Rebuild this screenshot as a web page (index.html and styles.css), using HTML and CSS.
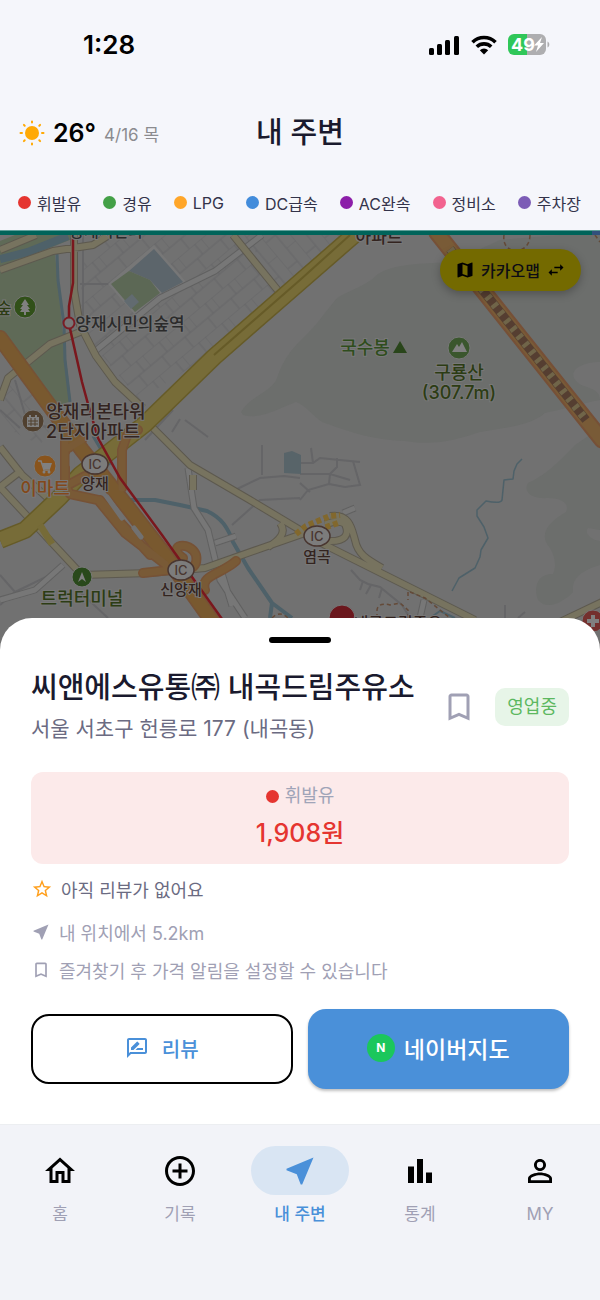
FILE: index.html
```html
<!DOCTYPE html>
<html lang="ko">
<head>
  <meta charset="UTF-8">
  <meta name="viewport" content="width=device-width, initial-scale=1.0">
  <title>내 주변</title>
  <link rel="stylesheet" href="styles.css">
</head>
<body>

<div class="status-bar">
  <span class="clock">1:28</span>
  <div class="status-icons">
    <svg width="31" height="20" viewBox="0 0 31 20">
      <rect x="0" y="13" width="5" height="7" rx="1.5"/>
      <rect x="8" y="9" width="5" height="11" rx="1.5"/>
      <rect x="16" y="5" width="5" height="15" rx="1.5"/>
      <rect x="25" y="1" width="5" height="19" rx="1.5"/>
    </svg>
    <svg width="26" height="20" viewBox="0 0 26 20">
      <g fill="none" stroke="#000" stroke-width="3.6">
        <path d="M1.5 7.2a16.5 16.5 0 0 1 23 0"/>
        <path d="M5.8 11.8a10.4 10.4 0 0 1 14.4 0"/>
      </g>
      <path d="M13 19.5l-4.2-4.3a6 6 0 0 1 8.4 0z"/>
    </svg>
    <svg width="42" height="21" viewBox="0 0 42 21">
      <path d="M19 0h13a6 6 0 0 1 6 6v9a6 6 0 0 1-6 6H19z" fill="#aeaeb0"/>
      <path d="M19 0H6a6 6 0 0 0-6 6v9a6 6 0 0 0 6 6h13z" fill="#30c759"/>
      <path d="M39.5 7.5c2.4 1 2.4 5 0 6z" fill="#aeaeb0"/>
      <text class="battery-text" x="3" y="17">49</text>
      <path d="M34 3l-8 8.5h4l-2 6.500 8-9h-4z" fill="#fff"/>
    </svg>
  </div>
</div>

<header class="header">
  <div class="weather">
    <svg width="26" height="26" viewBox="0 0 26 26">
      <circle cx="13" cy="13" r="7" fill="#ffa904"/>
      <g stroke="#ffa904" stroke-width="2" stroke-linecap="round">
        <path d="M13 1.5v1M13 23.5v1M1.5 13h1.5M23 13h1.5M4.9 4.9l.8.8M20.3 20.3l.8.8M4.9 21.1l.8-.8M20.3 5.700l.8-.8"/>
      </g>
    </svg>
    <span class="temp">26°</span>
    <span class="date">4/16 목</span>
  </div>
  <h1>내 주변</h1>
</header>

<ul class="legend">
  <li><span class="dot red"></span>휘발유</li>
  <li><span class="dot green"></span>경유</li>
  <li><span class="dot orange"></span>LPG</li>
  <li><span class="dot blue"></span>DC급속</li>
  <li><span class="dot purple"></span>AC완속</li>
  <li><span class="dot pink"></span>정비소</li>
  <li><span class="dot violet"></span>주차장</li>
</ul>

<div class="map-edge"></div>
<main class="map">
  <svg class="map-canvas" viewBox="0 235 600 415" preserveAspectRatio="xMidYMin slice">
    <defs>
      <pattern id="streets" width="30" height="26" patternUnits="userSpaceOnUse" patternTransform="rotate(-40)">
        <path d="M0 0H30M0 13H30M0 0V13M15 13V26M22 0V13" fill="none" stroke="#656567" stroke-width="1"/>
      </pattern>
      <pattern id="streets2" width="34" height="24" patternUnits="userSpaceOnUse" patternTransform="rotate(50)">
        <path d="M0 0H34M0 12H34M0 0V12M17 12V24" fill="none" stroke="#656567" stroke-width="1"/>
      </pattern>
    </defs>
    <rect x="0" y="235" width="600" height="415" fill="#717171"/>

    <!-- hills -->
    <g fill="#6c6e6c">
      <path d="M241 412C250 396 272 392 277 378C285 355 296 345 303 338C318 324 325 312 337 298C350 290 368 285 378 274C398 262 430 264 452 262L500 240L560 235H600V362C585 362 570 368 574 378C580 390 600 385 600 400C575 405 560 410 545 413C532 425 505 428 480 432C455 440 435 446 405 441C370 440 345 430 322 422C312 415 305 405 296 402C280 408 260 420 243 415Z"/>
      <path d="M600 428L575 445C556 465 545 475 528 483C522 494 535 499 548 498C562 498 570 504 566 512C548 522 538 535 550 548C556 558 556 568 553 574C535 574 534 590 538 600C548 612 566 600 573 592C572 582 576 572 600 565V541C590 540 584 532 588 528L600 530Z"/>
    </g>

    <!-- street blocks -->
    <path d="M84 262L110 235H234L278 290L214 352L140 400L96 350L78 318Z" fill="url(#streets)"/>
    <path d="M244 235H345L300 275L280 288Z" fill="url(#streets2)"/>
    <path d="M0 385L25 377L58 420L40 445L0 425Z" fill="url(#streets2)"/>
    <g fill="none" stroke="#656567" stroke-width="2">
      <path d="M83 235V330M80 284H110M185 420L208 437M145 440L173 410M172 432L180 419M0 410L20 428M15 380L28 425L52 427"/>
      <path d="M0 575L15 592L0 605M15 592L48 576L63 565M80 592L108 618M235 490L260 478L284 476L300 478M262 445V475M232 525L260 500L300 498M300 463H313L320 458L360 462M300 474L330 474L350 480M337 458V467L330 474L329 484L308 490L300 500M353 461L360 485L345 487L329 484M300 483L310 492M351 570L360 580L368 584L380 587L402 605L410 618M363 581L360 590M371 585L366 594M382 588L379 598M505 605V618M525 612L518 618M311 448L313 463"/>
    </g>

    <!-- parks and school -->
    <path d="M0 272L55 254L62 325L71 401L55 407L0 330Z" fill="#5f6a57"/>
    <path d="M20 260L72 239V235H15L0 241V266Z" fill="#5f6a57"/>
    <path d="M108 284L154 245L187 283L162 295L135 315Z" fill="#777"/>
    <path d="M129 271L154 249L183 282L162 293L150 280Z" fill="#5c656b"/>
    <path d="M111 284L129 271L150 280L160 293L135 312Z" fill="#5c6855"/>
    <path d="M124 301L132 294L139 302L131 309Z" fill="#626b70"/>
    <path d="M284 453L292 451L301 455V474L284 473Z" fill="#586469"/>

    <!-- water -->
    <g fill="none" stroke="#4e6169" stroke-linejoin="round">
      <path d="M0 259L28 252L68 236" stroke-width="8"/>
      <path d="M57 254L58 280L64 325L65 360L70 402M93 436L110 465" stroke-width="3"/>
      <path d="M130 500H155L180 505L207 511C222 518 228 528 233 542L248 568L272 603L292 618M272 603L270 618" stroke-width="4"/>
      <path d="M522 459L517 464L514 471L513 479L504 480L502 500Q501 504 486 501L477 510V516L484 527L488 538L481 550L480 557L475 568L459 578L452 591" stroke-width="1.5"/>
      <path d="M430 618L440 611L455 618" stroke-width="2"/>
    </g>

    <!-- narrow roads -->
    <g fill="none" stroke="#616161" stroke-width="7" stroke-linejoin="round">
      <path d="M94 352L160 298L215 271L262 235M188 468L194 508L208 530L220 580L245 618M215 543L236 536M343 513L355 508M0 600L35 590L63 565M221 570L232 606M420 618L424 600"/>
    </g>
    <g fill="none" stroke="#777" stroke-width="5" stroke-linejoin="round">
      <path d="M94 352L160 298L215 271L262 235M188 468L194 508L208 530L220 580L245 618M215 543L236 536M343 513L355 508M0 600L35 590L63 565M221 570L232 606M420 618L424 600"/>
    </g>

    <!-- cream roads -->
    <g fill="none" stroke="#5d594f" stroke-width="8" stroke-linejoin="round">
      <path d="M0 270L53 251L93 245L109 235M0 250L36 235M74 235V290L80 325L96 356L115 382L143 408M80 332L50 344L8 378L0 400M233 235L280 293M0 447L22 475L50 500M0 487L82 575L150 573L205 568L262 548L305 533M0 487L22 470M150 425L190 465L250 500L325 545L475 620M280 523C287 532 280 540 268 547M193 475V490M328 541C345 542 350 535 345 524C340 520 333 522 325 524M330 516C350 513 352 530 355 540C358 555 368 560 382 568M560 622L602 602"/>
    </g>
    <g fill="none" stroke="#77735f" stroke-width="6" stroke-linejoin="round">
      <path d="M0 270L53 251L93 245L109 235M0 250L36 235M74 235V290L80 325L96 356L115 382L143 408M80 332L50 344L8 378L0 400M233 235L280 293M0 447L22 475L50 500M0 487L82 575L150 573L205 568L262 548L305 533M0 487L22 470M150 425L190 465L250 500L325 545L475 620M280 523C287 532 280 540 268 547M193 475V490M328 541C345 542 350 535 345 524C340 520 333 522 325 524M330 516C350 513 352 530 355 540C358 555 368 560 382 568M560 622L602 602"/>
    </g>
    <path d="M296 534L306 526L330 516L340 515M318 530L338 523" fill="none" stroke="#82682d" stroke-width="6" stroke-dasharray="5 3"/>

    <!-- yellow highway -->
    <g fill="none" stroke-linejoin="round">
      <path d="M0 540L25 530L60 497L80 475L145 424L214 357L300 282L354 235" stroke="#665b28" stroke-width="18"/>
      <path d="M0 540L25 530L60 497L80 475L145 424L214 357L300 282L354 235" stroke="#776c38" stroke-width="15"/>
      <path d="M214 355L300 280L350 235" stroke="#665b28" stroke-width="2"/>
      <path d="M40 525L52 544" stroke="#766b38" stroke-width="7"/>
    </g>

    <!-- orange highway and interchange -->
    <g fill="none" stroke-linejoin="round" stroke-linecap="round">
      <path d="M0 338L60 420L82 450L130 510L165 555L215 625" stroke="#765236" stroke-width="16"/>
      <path d="M65 425V485L70 494L98 500L125 533L165 564M122 488V450L127 435L138 430M65 450L82 440M68 485L85 476M100 500L150 555M143 573L170 570L183 558C165 545 190 540 196 555C199 570 185 572 177 565M205 590C200 575 220 575 236 561" stroke="#765236" stroke-width="10"/>
      <path d="M0 338L60 420L82 450L130 510L165 555L215 625" stroke="#79592f" stroke-width="13"/>
      <path d="M65 425V485L70 494L98 500L125 533L165 564M122 488V450L127 435L138 430M65 450L82 440M68 485L85 476M100 500L150 555M143 573L170 570L183 558C165 545 190 540 196 555C199 570 185 572 177 565M205 590C200 575 220 575 236 561" stroke="#795a36" stroke-width="7"/>
      <path d="M107 497L122 518M134 528L141 537M72 455V465" stroke="#717171" stroke-width="5"/>
      <path d="M437 233L602 440" stroke="#765037" stroke-width="17"/>
      <path d="M437 233L602 440" stroke="#795b37" stroke-width="13"/>
    </g>
    <path d="M450 249L586 420" fill="none" stroke="#553e31" stroke-width="9"/>
    <path d="M450 249L586 420" fill="none" stroke="#706549" stroke-width="8" stroke-dasharray="4 6"/>

    <!-- subway line -->
    <path d="M73 235V283L69 306V324L82 382L88 404L98 438L120 478L162 535L222 619" fill="none" stroke="#7a171d" stroke-width="2.5"/>
    <circle cx="69" cy="323" r="5.5" fill="#787878" stroke="#7a1d24" stroke-width="2"/>

    <g fill="none" stroke="#644a38" stroke-width="1.5" stroke-dasharray="4 3">
      <path d="M504 235C501 256 530 256 530 235M595 235L600 242M377 618V610Q378 602 390 605L400 603L408 610V618M410 592L425 598L450 618M408 592V600M272 618Q280 610 288 618"/>
    </g>

    <!-- places -->
    <g stroke="#787878" stroke-width="1">
      <circle cx="25" cy="307" r="11" fill="#315019"/>
      <circle cx="33" cy="421" r="11" fill="#50402f"/>
      <circle cx="45" cy="466" r="11" fill="#89541c"/>
      <circle cx="82" cy="577" r="10" fill="#29491b"/>
      <circle cx="459" cy="348" r="11" fill="#3a562d"/>
      <circle cx="342" cy="618" r="13" fill="#6b171d"/>
      <circle cx="593" cy="621" r="11" fill="#74302e"/>
    </g>
    <g fill="#808080">
      <path d="M25 299l4 6h-2l3 4h-2l2 3h-4v3h-2v-3h-4l2-3h-2l3-4h-2z"/>
      <path d="M27 417h2v-2h2v2h4v-2h2v2h2v10H27z"/>
      <path d="M82 572l4 10-4-3-4 3z"/>
      <path d="M452 352l5-8 2 3 3-5 5 10z"/>
      <path d="M591 615h4v4h4v4h-4v4h-4v-4h-4v-4h4z"/>
      <path d="M42 463h10l-2 6h-6z"/>
    </g>
    <path d="M38 461h3l3 9h6" fill="none" stroke="#808080" stroke-width="1.5"/>
    <circle cx="44" cy="472" r="1.5" fill="#808080"/>
    <circle cx="49" cy="472" r="1.5" fill="#808080"/>
    <path d="M28 421h10M28 424h10M31 418v8M35 418v8" stroke="#50402f" stroke-width="1"/>
    <path d="M400 341l7 12h-14z" fill="#29451a"/>
    <g fill="#7c7c7c" stroke="#493630" stroke-width="1.5">
      <ellipse cx="95" cy="464" rx="13" ry="10"/>
      <ellipse cx="181" cy="570" rx="13" ry="10"/>
      <ellipse cx="317" cy="536" rx="13" ry="10"/>
    </g>
    <g class="ic-label">
      <text x="95" y="469">IC</text>
      <text x="181" y="575">IC</text>
      <text x="317" y="541">IC</text>
    </g>

    <g class="place-label">
      <text x="106" y="237">양재시민의</text>
      <text x="130" y="330" class="station">양재시민의숲역</text>
      <text x="379" y="243" class="brown station">아파트</text>
      <text x="4" y="314" class="forest">숲</text>
      <text x="96" y="418" class="brown large">양재리본타워</text>
      <text x="93" y="438" class="brown large">2단지아파트</text>
      <text x="45" y="495" class="mart large">이마트</text>
      <text x="95" y="489" class="brown small">양재</text>
      <text x="181" y="595" class="brown small">신양재</text>
      <text x="317" y="562" class="brown small">염곡</text>
      <text x="82" y="605" class="forest large">트럭터미널</text>
      <text x="365" y="354" class="leaf large">국수봉</text>
      <text x="459" y="379" class="forest large">구룡산</text>
      <text x="459" y="399" class="forest large">(307.7m)</text>
      <text x="398" y="629" class="brown">내곡드림주유</text>
    </g>
  </svg>
  <button class="map-switch" type="button">
    <svg width="20" height="20" viewBox="0 0 24 24"><path d="M20.5 3l-.16.03L15 5.1 9 3 3.36 4.9c-.21.07-.36.25-.36.48V20.5c0 .28.22.5.5.5l.16-.03L9 18.9l6 2.1 5.64-1.9c.21-.07.36-.25.36-.48V3.5c0-.28-.22-.5-.5-.5zM15 19l-6-2.11V5l6 2.11V19z"/></svg>
    카카오맵
    <svg width="20" height="20" viewBox="0 0 24 24"><path d="M6.99 11L3 15l3.99 4v-3H14v-2H6.99v-3zM21 9l-3.99-4v3H10v2h7.01v3L21 9z"/></svg>
  </button>
</main>

<section class="sheet">
  <div class="handle"></div>

  <div class="station-head">
    <div class="station-info">
      <h2>씨앤에스유통㈜ 내곡드림주유소</h2>
      <p>서울 서초구 헌릉로 177 (내곡동)</p>
    </div>
    <button class="bookmark" type="button" aria-label="즐겨찾기">
      <svg width="36" height="36" viewBox="0 0 24 24"><path d="M17 3H7c-1.1 0-1.99.9-1.99 2L5 21l7-3 7 3V5c0-1.1-.9-2-2-2zm0 15l-5-2.18L7 18V5h10v13z"/></svg>
    </button>
    <span class="badge">영업중</span>
  </div>

  <div class="price-card">
    <div class="fuel"><span class="dot red"></span>휘발유</div>
    <div class="price">1,908원</div>
  </div>

  <p class="review-line">
    <svg width="22" height="22" viewBox="0 0 24 24"><path d="M22 9.24l-7.19-.62L12 2 9.19 8.63 2 9.24l5.46 4.73L5.82 21 12 17.27 18.18 21l-1.63-7.03L22 9.24zM12 15.4l-3.76 2.27 1-4.28-3.32-2.88 4.38-.38L12 6.1l1.71 4.04 4.38.38-3.32 2.88 1 4.28L12 15.4z"/></svg>
    아직 리뷰가 없어요
  </p>
  <p class="info-line">
    <svg width="20" height="20" viewBox="0 0 24 24"><path d="M21 3L3 10.53v.98l6.84 2.65L12.48 21h.98L21 3z"/></svg>
    내 위치에서 5.2km
  </p>
  <p class="info-line">
    <svg width="20" height="20" viewBox="0 0 24 24"><path d="M17 3H7c-1.1 0-1.99.9-1.99 2L5 21l7-3 7 3V5c0-1.1-.9-2-2-2zm0 15l-5-2.18L7 18V5h10v13z"/></svg>
    즐겨찾기 후 가격 알림을 설정할 수 있습니다
  </p>

  <div class="actions">
    <button class="review-button" type="button">
      <svg width="24" height="24" viewBox="0 0 24 24"><path d="M20 2H4c-1.1 0-1.99.9-1.99 2L2 22l4-4h14c1.1 0 2-.9 2-2V4c0-1.1-.9-2-2-2zm0 14H5.17l-.59.59-.58.58V4h16v12zm-9.5-2H18v-2h-5.5zm3.86-5.87c.2-.2.2-.51 0-.71l-1.77-1.77c-.2-.2-.51-.2-.71 0L6 11.53V14h2.47l5.89-5.87z"/></svg>
      리뷰
    </button>
    <button class="naver-button" type="button">
      <span class="naver-logo">N</span>
      네이버지도
    </button>
  </div>
</section>

<nav class="tab-bar">
  <a href="#home">
    <span class="tab-icon"><svg width="36" height="36" viewBox="0 0 24 24"><path d="M12 5.69l5 4.5V18h-2v-6H9v6H7v-7.81l5-4.5M12 3L2 12h3v8h6v-6h2v6h6v-8h3L12 3z"/></svg></span>
    홈
  </a>
  <a href="#record">
    <span class="tab-icon"><svg width="36" height="36" viewBox="0 0 24 24"><path d="M13 7h-2v4H7v2h4v4h2v-4h4v-2h-4V7zm-1-5C6.48 2 2 6.48 2 12s4.48 10 10 10 10-4.48 10-10S17.52 2 12 2zm0 18c-4.41 0-8-3.59-8-8s3.59-8 8-8 8 3.59 8 8-3.59 8-8 8z"/></svg></span>
    기록
  </a>
  <a href="#nearby" class="active">
    <span class="tab-icon"><svg width="36" height="36" viewBox="0 0 24 24"><path d="M21 3L3 10.53v.98l6.84 2.65L12.48 21h.98L21 3z"/></svg></span>
    내 주변
  </a>
  <a href="#stats">
    <span class="tab-icon"><svg width="36" height="36" viewBox="0 0 24 24"><path d="M4 9h4v11H4zM10 4h4v16h-4zM16 13h4v7h-4z"/></svg></span>
    통계
  </a>
  <a href="#my">
    <span class="tab-icon"><svg width="36" height="36" viewBox="0 0 24 24"><path d="M12 5.9a2.1 2.1 0 1 1 0 4.200 2.1 2.1 0 0 1 0-4.200m0 9c2.97 0 6.1 1.46 6.1 2.1v1.1H5.9V17c0-.64 3.13-2.1 6.1-2.1M12 4C9.79 4 8 5.79 8 8s1.79 4 4 4 4-1.79 4-4-1.79-4-4-4zm0 9c-2.67 0-8 1.34-8 4v3h16v-3c0-2.66-5.33-4-8-4z"/></svg></span>
    MY
  </a>
</nav>

</body>
</html>
```

FILE: styles.css
```css
* {
  box-sizing: border-box;
  margin: 0;
  padding: 0;
}

body {
  min-height: 100vh;
  display: flex;
  flex-direction: column;
  background: #f5f6fb;
  color: #1a1a2e;
  font-family: Inter, "Noto Sans CJK KR", sans-serif;
  font-size: 18px;
}

svg {
  display: block;
  flex-shrink: 0;
}

button {
  border: none;
  font-family: inherit;
  cursor: pointer;
}

.status-bar {
  height: 89px;
  padding: 0 50px 0 83px;
  display: flex;
  align-items: center;
  justify-content: space-between;
  color: #000;
}

.clock {
  font-size: 26px;
  font-weight: 600;
}

.status-icons {
  display: flex;
  align-items: center;
  gap: 11px;
}

.battery-text {
  font-size: 18px;
  font-weight: 700;
  fill: #fff;
}

.header {
  height: 88px;
  padding: 0 19px;
  display: grid;
  grid-template-columns: 1fr auto 1fr;
  align-items: center;
}

.weather {
  display: flex;
  align-items: center;
  gap: 8px;
}

.temp {
  color: #000;
  font-size: 25px;
  font-weight: 600;
}

.date {
  color: #8b8b8f;
  font-size: 17px;
}

h1 {
  font-size: 29px;
  font-weight: 500;
  line-height: 40px;
}

.legend {
  height: 53px;
  padding: 0 19px 2px 18px;
  display: flex;
  align-items: center;
  justify-content: space-between;
  list-style: none;
  color: #33334a;
  font-size: 16px;
}

.legend li {
  display: flex;
  align-items: center;
  gap: 6px;
  white-space: nowrap;
}

.dot {
  width: 13px;
  height: 13px;
  border-radius: 50%;
}

.red { background: #e53530; }
.green { background: #43a047; }
.orange { background: #ffa629; }
.blue { background: #428cdb; }
.purple { background: #8c1ea9; }
.pink { background: #f2638f; }
.violet { background: #7c5cb6; }

.map-edge {
  height: 5px;
  border-top: 1px solid #5f9f99;
  background: linear-gradient(to left, #31507c 8px, #00645a 8px);
}

.map {
  display: grid;
  background: #717171;
}

.map-canvas {
  grid-area: 1 / 1;
  width: 100%;
  height: 415px;
}

.place-label text {
  font-size: 16px;
  font-weight: 500;
  text-anchor: middle;
  fill: #2b2b2b;
  stroke: #787878;
  stroke-width: 2px;
  paint-order: stroke;
}

.place-label .station { font-size: 17px; }
.place-label .large { font-size: 18px; }
.place-label .small { font-size: 15px; }
.place-label .brown { fill: #33241f; }
.place-label .forest { fill: #2c3c14; }
.place-label .leaf { fill: #2f4d1d; }
.place-label .mart { fill: #83481a; }

.ic-label text {
  font-size: 13px;
  font-weight: 500;
  text-anchor: middle;
  fill: #493630;
}

.map-switch {
  grid-area: 1 / 1;
  justify-self: end;
  align-self: start;
  height: 42px;
  margin: 14px 19px 0 0;
  padding: 0 15px;
  display: flex;
  align-items: center;
  gap: 6px;
  border-radius: 21px;
  background: #746a00;
  box-shadow: 0 3px 8px rgba(0, 0, 0, 0.25);
  color: #0c0c15;
  font-size: 16px;
  font-weight: 500;
}

.sheet {
  position: relative;
  margin-top: -32px;
  padding: 19px 31px 35px;
  border-radius: 32px 32px 0 0;
  background: #fff;
}

.handle {
  width: 62px;
  height: 6px;
  margin: 0 auto 23px;
  border-radius: 3px;
  background: #000;
}

.station-head {
  display: flex;
  align-items: center;
  gap: 18px;
  margin-bottom: 24px;
}

.station-info {
  flex: 1;
}

h2 {
  font-size: 29px;
  font-weight: 500;
  line-height: 43px;
}

.station-info p {
  color: #6b6b82;
  font-size: 21px;
  line-height: 39px;
}

.bookmark {
  background: none;
}

.bookmark svg {
  fill: #a0a0b4;
}

.badge {
  padding: 0 12px;
  border-radius: 10px;
  background: #e7f5e8;
  color: #5cb860;
  line-height: 38px;
}

.price-card {
  height: 92px;
  padding-top: 10px;
  border-radius: 12px;
  background: #fceaea;
  text-align: center;
}

.fuel {
  display: flex;
  align-items: center;
  justify-content: center;
  gap: 6px;
  color: #a0a4b8;
  line-height: 28px;
}

.price {
  color: #e53530;
  font-size: 25px;
  font-weight: 500;
  line-height: 46px;
}

.review-line,
.info-line {
  display: flex;
  align-items: center;
}

.review-line {
  gap: 8px;
  height: 49px;
  color: #6b6b82;
  fill: #ff9f1c;
}

.info-line {
  gap: 8px;
  height: 38px;
  color: #a0a0b4;
  fill: #a0a0b4;
}

.actions {
  display: grid;
  grid-template-columns: 1fr 1fr;
  align-items: center;
  gap: 15px;
  margin-top: 20px;
}

.review-button,
.naver-button {
  display: flex;
  align-items: center;
  justify-content: center;
  padding-bottom: 2px;
  border-radius: 18px;
}

.review-button {
  height: 70px;
  gap: 13px;
  border: 2px solid #000;
  background: #fff;
  color: #4a90d9;
  fill: #4a90d9;
  font-size: 20px;
  font-weight: 500;
}

.naver-button {
  height: 80px;
  gap: 9px;
  background: #4a90d9;
  box-shadow: 0 2px 3px rgba(0, 0, 0, 0.25);
  color: #fff;
  font-size: 23px;
  font-weight: 500;
}

.naver-logo {
  width: 28px;
  border-radius: 50%;
  background: #1bc75c;
  font-size: 12px;
  font-weight: 700;
  line-height: 28px;
}

.tab-bar {
  flex: 1;
  min-height: 176px;
  padding-top: 21px;
  display: grid;
  grid-template-columns: repeat(5, 1fr);
  border-top: 1px solid #eceef1;
  background: #f2f3f8;
}

.tab-bar a {
  display: flex;
  flex-direction: column;
  align-items: center;
  gap: 5px;
  color: #a0a0b4;
  font-size: 17px;
  line-height: 28px;
  text-decoration: none;
}

.tab-icon {
  width: 98px;
  height: 49px;
  display: flex;
  align-items: center;
  justify-content: center;
  border-radius: 25px;
  fill: #000;
}

.tab-bar .active {
  color: #4a90d9;
  font-weight: 500;
}

.active .tab-icon {
  background: #d9e5f3;
  fill: #4a90d9;
}
```
